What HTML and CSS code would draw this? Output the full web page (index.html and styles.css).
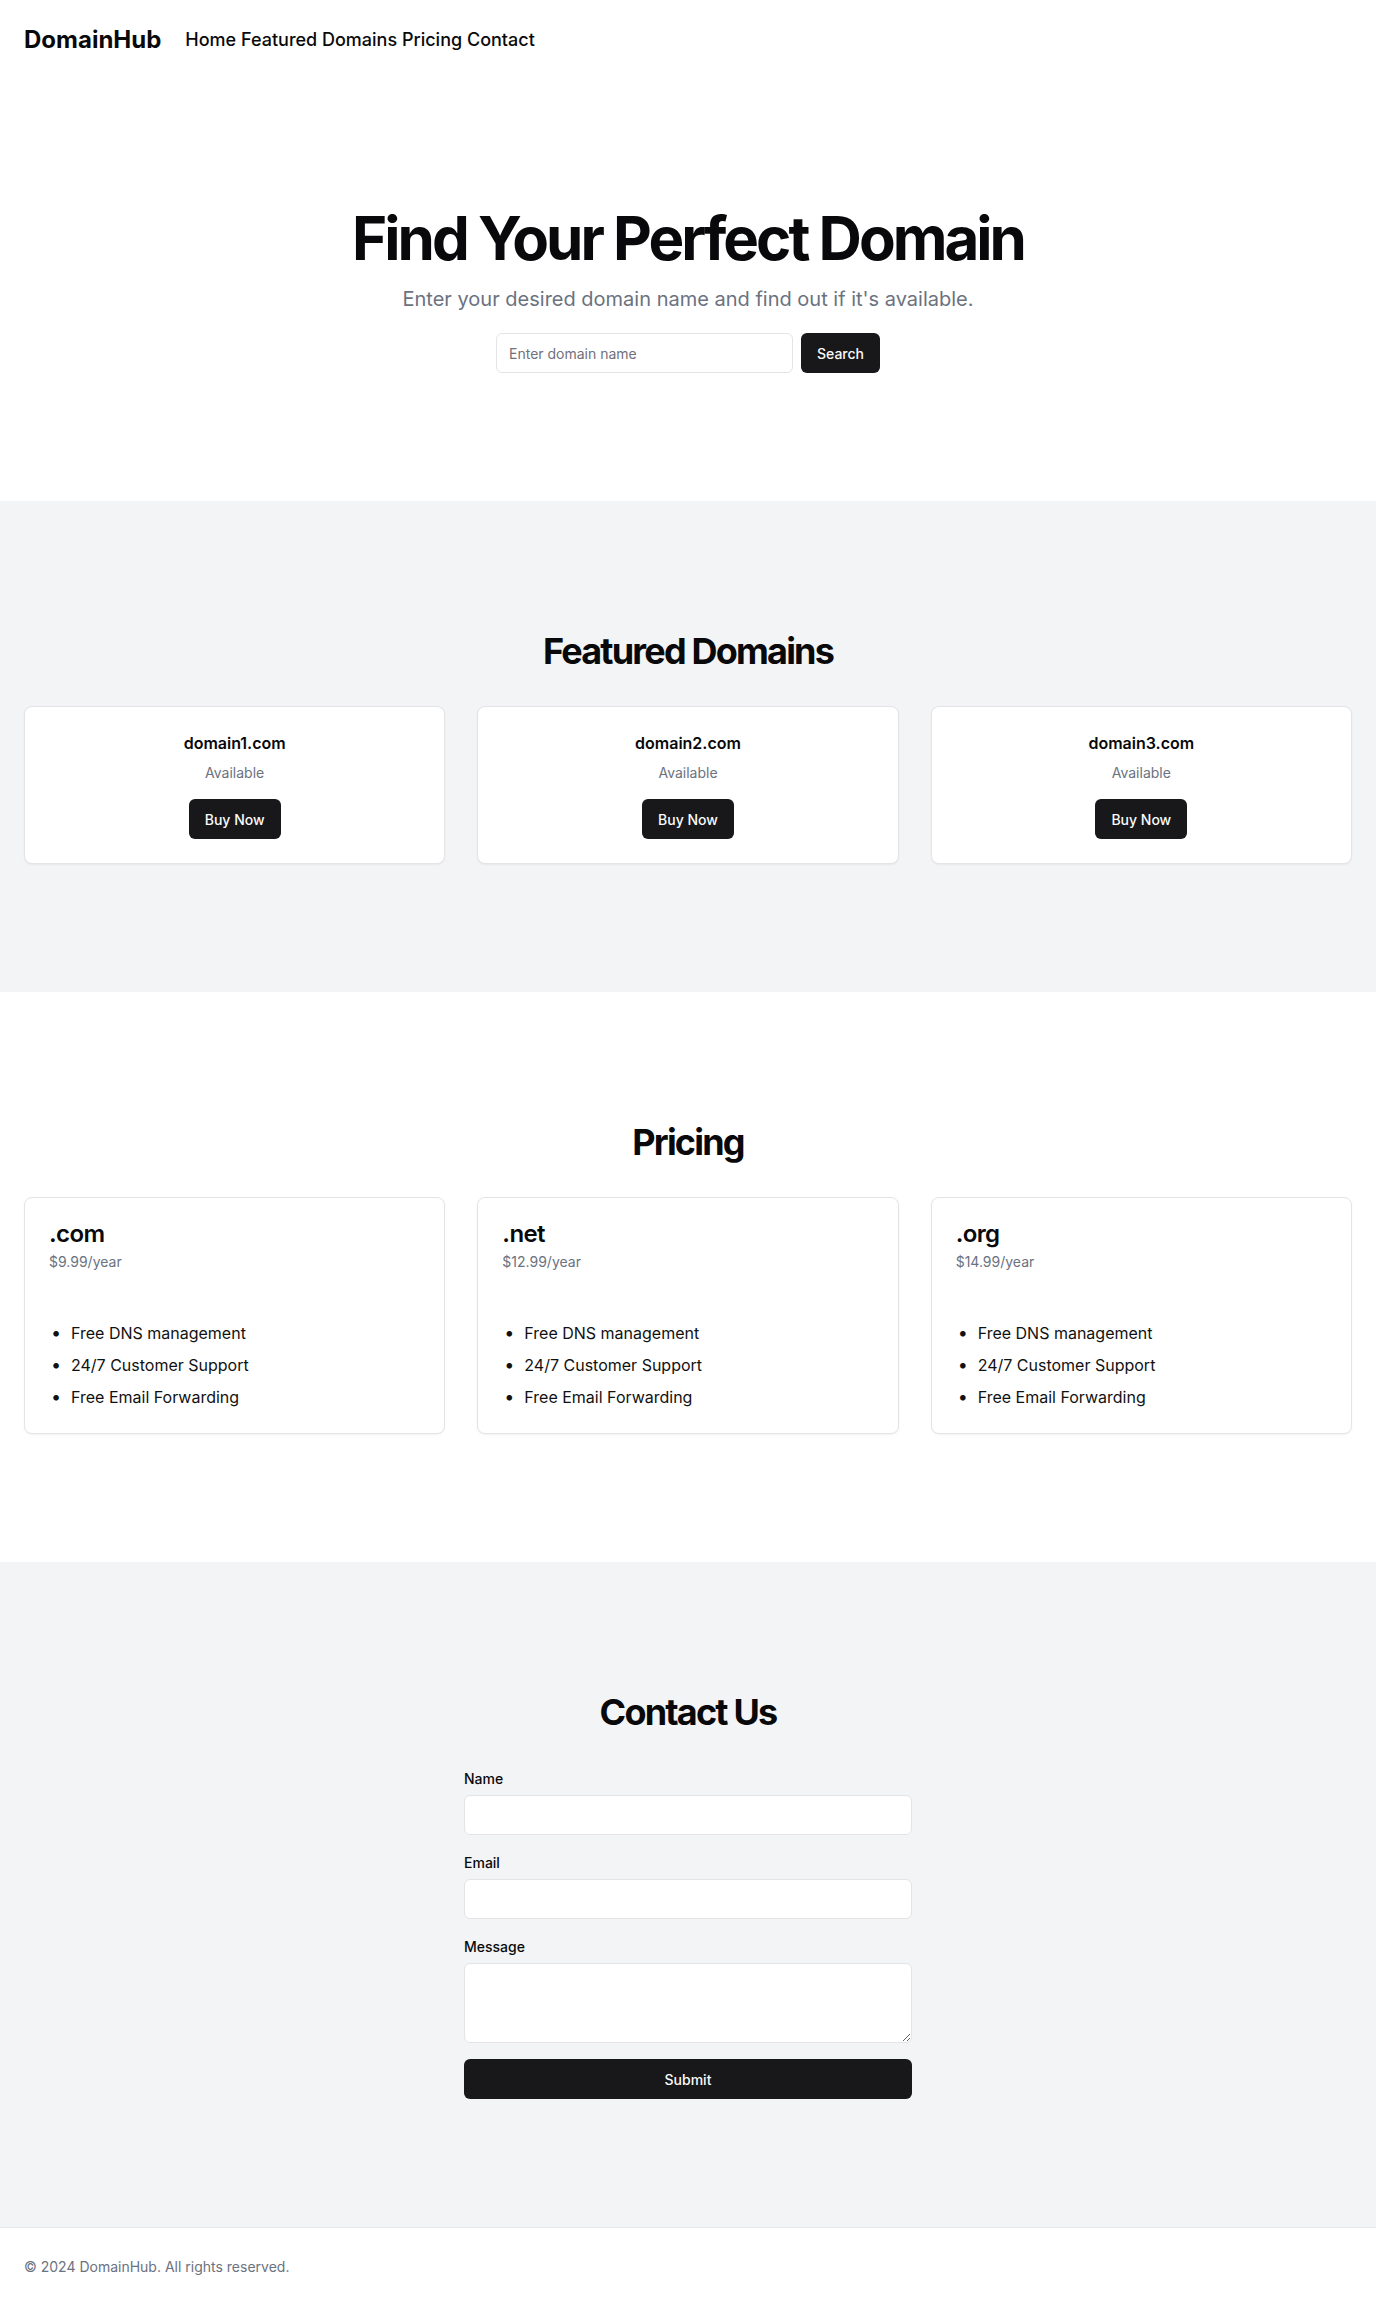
FILE: index.html
```html
<!DOCTYPE html>
<html lang="en">
<head>
<meta charset="utf-8">
<title>DomainHub</title>
<link rel="stylesheet" href="styles.css">
</head>
<body>
<header class="site-header">
  <a class="logo" href="#">DomainHub</a>
  <nav class="nav">
    <a href="#">Home</a> <a href="#featured">Featured Domains</a> <a href="#pricing">Pricing</a> <a href="#contact">Contact</a>
  </nav>
</header>

<main>
  <section class="hero">
    <h1 class="hero-title">Find Your Perfect Domain</h1>
    <p class="hero-sub">Enter your desired domain name and find out if it's available.</p>
    <form class="search-form">
      <input class="input search-input" type="text" placeholder="Enter domain name">
      <button class="btn" type="submit">Search</button>
    </form>
  </section>

  <section class="section section-gray" id="featured">
    <h2 class="section-title">Featured Domains</h2>
    <div class="grid">
      <div class="card domain-card">
        <div class="domain-name">domain1.com</div>
        <div class="domain-status">Available</div>
        <button class="btn buy-btn">Buy Now</button>
      </div>
      <div class="card domain-card">
        <div class="domain-name">domain2.com</div>
        <div class="domain-status">Available</div>
        <button class="btn buy-btn">Buy Now</button>
      </div>
      <div class="card domain-card">
        <div class="domain-name">domain3.com</div>
        <div class="domain-status">Available</div>
        <button class="btn buy-btn">Buy Now</button>
      </div>
    </div>
  </section>

  <section class="section" id="pricing">
    <h2 class="section-title">Pricing</h2>
    <div class="grid">
      <div class="card price-card">
        <h3 class="price-tld">.com</h3>
        <p class="price-amount">$9.99/year</p>
        <ul class="features">
          <li>Free DNS management</li>
          <li>24/7 Customer Support</li>
          <li>Free Email Forwarding</li>
        </ul>
      </div>
      <div class="card price-card">
        <h3 class="price-tld">.net</h3>
        <p class="price-amount">$12.99/year</p>
        <ul class="features">
          <li>Free DNS management</li>
          <li>24/7 Customer Support</li>
          <li>Free Email Forwarding</li>
        </ul>
      </div>
      <div class="card price-card">
        <h3 class="price-tld">.org</h3>
        <p class="price-amount">$14.99/year</p>
        <ul class="features">
          <li>Free DNS management</li>
          <li>24/7 Customer Support</li>
          <li>Free Email Forwarding</li>
        </ul>
      </div>
    </div>
  </section>

  <section class="section section-gray" id="contact">
    <h2 class="section-title">Contact Us</h2>
    <form class="contact-form">
      <div class="field">
        <label class="label" for="name">Name</label>
        <input class="input" id="name" type="text">
      </div>
      <div class="field">
        <label class="label" for="email">Email</label>
        <input class="input" id="email" type="email">
      </div>
      <div class="field">
        <label class="label" for="message">Message</label>
        <textarea class="input textarea" id="message"></textarea>
      </div>
      <button class="btn submit-btn" type="submit">Submit</button>
    </form>
  </section>
</main>

<footer class="site-footer">
  <p>© 2024 DomainHub. All rights reserved.</p>
</footer>
</body>
</html>
```

FILE: styles.css
```css
* {
  box-sizing: border-box;
}

body {
  margin: 0;
  font-family: Inter, "Noto Sans", "Liberation Sans", sans-serif;
  color: #09090b;
  background: #ffffff;
}

a {
  color: inherit;
  text-decoration: none;
}

h1, h2, h3, p, ul {
  margin: 0;
}

/* Header */
.site-header {
  display: flex;
  align-items: center;
  height: 80px;
  padding: 0 24px;
}

.logo {
  font-size: 24px;
  line-height: 32px;
  font-weight: 700;
}

.nav {
  margin-left: 24px;
  font-size: 18px;
  line-height: 28px;
  font-weight: 500;
}

/* Hero */
.hero {
  display: flex;
  flex-direction: column;
  align-items: center;
  text-align: center;
  padding: 128px 24px 128px;
}

.hero-title {
  font-size: 60px;
  line-height: 60px;
  font-weight: 700;
  letter-spacing: -0.05em;
}

.hero-sub {
  margin-top: 17px;
  font-size: 20px;
  line-height: 28px;
  color: #6b7280;
}

.search-form {
  display: flex;
  gap: 8px;
  width: 100%;
  max-width: 384px;
  margin-top: 20px;
}

.input {
  display: block;
  width: 100%;
  height: 40px;
  padding: 8px 12px;
  font-family: inherit;
  font-size: 14px;
  color: #09090b;
  background: #ffffff;
  border: 1px solid #e4e4e7;
  border-radius: 6px;
  outline: none;
}

.input::placeholder {
  color: #71717a;
}

.search-input {
  flex: 1;
}

.btn {
  display: inline-flex;
  align-items: center;
  justify-content: center;
  height: 40px;
  padding: 0 16px;
  font-family: inherit;
  font-size: 14px;
  font-weight: 500;
  color: #fafafa;
  background: #18181b;
  border: none;
  border-radius: 6px;
  cursor: pointer;
}

/* Sections */
.section {
  padding: 128px 24px;
}

.section-gray {
  background: #f3f4f6;
}

.section-title {
  text-align: center;
  font-size: 36px;
  line-height: 44px;
  font-weight: 700;
  letter-spacing: -0.05em;
  margin-bottom: 33px;
}

.grid {
  display: grid;
  grid-template-columns: repeat(3, 1fr);
  gap: 32px;
}

.card {
  background: #ffffff;
  border: 1px solid #e4e4e7;
  border-radius: 8px;
  box-shadow: 0 1px 2px rgba(0, 0, 0, 0.05);
  padding: 24px;
}

.domain-card {
  display: flex;
  flex-direction: column;
  align-items: center;
  text-align: center;
}

.domain-name {
  font-size: 16px;
  line-height: 24px;
  font-weight: 600;
}

.domain-status {
  margin-top: 8px;
  font-size: 14px;
  line-height: 20px;
  color: #6b7280;
}

.buy-btn {
  margin-top: 16px;
}

.price-tld {
  font-size: 24px;
  line-height: 24px;
  font-weight: 600;
  letter-spacing: -0.025em;
}

.price-amount {
  margin-top: 6px;
  font-size: 14px;
  line-height: 20px;
  color: #6b7280;
}

.features {
  margin-top: 49px;
  padding-left: 22px;
  list-style: none;
  font-size: 16px;
  line-height: 24px;
  color: #111111;
}

.features li::before {
  content: "•";
  display: inline-block;
  width: 20px;
  margin-left: -20px;
  font-size: 18px;
}

.features li + li {
  margin-top: 8px;
}

/* Contact */
.contact-form {
  max-width: 448px;
  margin: 0 auto;
  padding-top: 2px;
  display: flex;
  flex-direction: column;
  gap: 18px;
}

.label {
  display: block;
  font-size: 14px;
  line-height: 20px;
  font-weight: 500;
  margin-bottom: 6px;
}

.textarea {
  height: 80px;
  min-height: 80px;
  resize: vertical;
}

.submit-btn {
  width: 100%;
  margin-top: -2px;
}

/* Footer */
.site-footer {
  border-top: 1px solid #e5e7eb;
  padding: 29px 24px 29px;
  font-size: 14px;
  line-height: 20px;
  color: #6b7280;
}
```
